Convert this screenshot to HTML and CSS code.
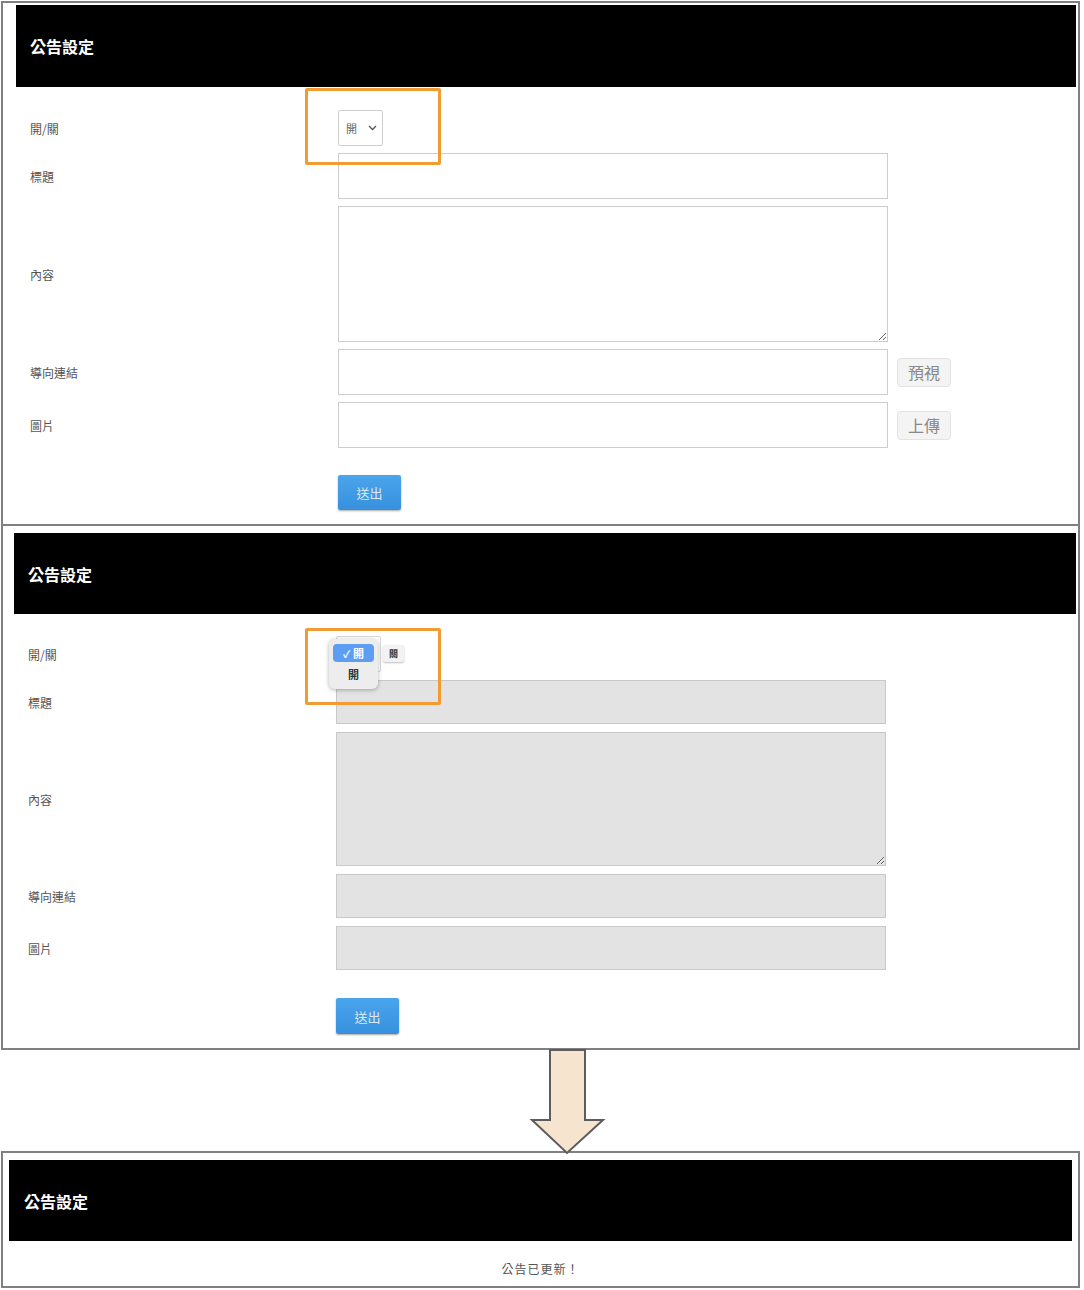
FILE: index.html
```html
<!DOCTYPE html>
<html lang="zh-Hant">
<head>
    <meta charset="UTF-8">
    <meta name="viewport" content="width=device-width, initial-scale=1.0">
    <title>公告設定</title>
    <link rel="stylesheet" href="styles.css">
</head>
<body>
    <div class="page">

        <!-- step 1: form -->
        <div class="panel">
            <div class="panel-head">公告設定</div>
            <div class="form">
                <div class="row">
                    <div class="label">開/關</div>
                    <div class="select-wrap">
                        <select class="select">
                            <option>開</option>
                            <option>關</option>
                        </select>
                        <svg class="chevron" width="9" height="6" viewBox="0 0 9 6"><path d="M1 1l3.5 3.5L8 1" fill="none" stroke="#555" stroke-width="1.3"/></svg>
                    </div>
                </div>
                <div class="row">
                    <div class="label">標題</div>
                    <input class="field" type="text">
                </div>
                <div class="row">
                    <div class="label">內容</div>
                    <textarea class="field area"></textarea>
                </div>
                <div class="row">
                    <div class="label">導向連結</div>
                    <input class="field" type="text">
                    <button class="btn-light">預視</button>
                </div>
                <div class="row">
                    <div class="label">圖片</div>
                    <input class="field" type="text">
                    <button class="btn-light">上傳</button>
                </div>
                <div class="row submit-row">
                    <div class="label"></div>
                    <button class="btn-submit">送出</button>
                </div>
            </div>
            <div class="mark"></div>
        </div>

        <!-- step 2: switched off -->
        <div class="panel panel-two">
            <div class="panel-head">公告設定</div>
            <div class="form">
                <div class="row">
                    <div class="label">開/關</div>
                    <div class="select-wrap">
                        <div class="select ghost"></div>
                        <div class="menu">
                            <div class="menu-item active"><span class="check">✓</span>開</div>
                            <div class="menu-item">開</div>
                        </div>
                        <div class="chip">關</div>
                    </div>
                </div>
                <div class="row">
                    <div class="label">標題</div>
                    <input class="field" type="text" disabled>
                </div>
                <div class="row">
                    <div class="label">內容</div>
                    <textarea class="field area" disabled></textarea>
                </div>
                <div class="row">
                    <div class="label">導向連結</div>
                    <input class="field" type="text" disabled>
                </div>
                <div class="row">
                    <div class="label">圖片</div>
                    <input class="field" type="text" disabled>
                </div>
                <div class="row submit-row">
                    <div class="label"></div>
                    <button class="btn-submit">送出</button>
                </div>
            </div>
            <div class="mark"></div>
        </div>

        <div class="arrow">
            <svg width="76" height="106" viewBox="0 0 76 106">
                <path d="M20 2H55V72H73L37 105L2 72H20Z" fill="#f6e4cf" stroke="#5c5c5c" stroke-width="2" stroke-linejoin="miter"/>
            </svg>
        </div>

        <!-- step 3: done -->
        <div class="panel panel-three">
            <div class="panel-head">公告設定</div>
            <div class="message">公告已更新！</div>
        </div>

    </div>
</body>
</html>
```

FILE: styles.css
```css
body {
    margin: 0;
    background: #fff;
    font-family: "Noto Sans CJK TC", "Noto Sans", sans-serif;
}

.page {
    width: 1080px;
    padding-left: 1px;
    box-sizing: border-box;
}

.panel {
    position: relative;
    border: 2px solid #808080;
    padding: 2px 2px 14px 13px;
    margin-top: 1px;
}

.panel-head {
    height: 82px;
    background: #000;
    color: #fff;
    font-size: 16px;
    font-weight: bold;
    display: flex;
    align-items: center;
    padding-left: 14px;
}

.form {
    display: flex;
    flex-direction: column;
    gap: 7px;
    padding: 23px 0 0 14px;
}

.row {
    display: flex;
    align-items: center;
}

.label {
    width: 308px;
    flex-shrink: 0;
    font-size: 12px;
    color: #555;
}

.select-wrap {
    position: relative;
    width: 45px;
    height: 36px;
}

.select {
    width: 45px;
    height: 36px;
    box-sizing: border-box;
    border: 1px solid #cfcfcf;
    border-radius: 2px;
    background: #fff;
    appearance: none;
    -webkit-appearance: none;
    padding-left: 7px;
    font-family: inherit;
    font-size: 11px;
    color: #666;
}

.chevron {
    position: absolute;
    right: 6px;
    top: 15px;
}

.field {
    width: 550px;
    height: 46px;
    box-sizing: border-box;
    border: 1px solid #cdcdcd;
    background: #fff;
    margin: 0;
    font-family: inherit;
}

.field:disabled {
    background: #e3e3e3;
    border-color: #c8c8c8;
}

.area {
    height: 136px;
    resize: vertical;
}

.btn-light {
    margin-left: 9px;
    width: 54px;
    height: 29px;
    background: #f4f4f4;
    border: 1px solid #e3e3e3;
    border-radius: 4px;
    color: #888;
    font-family: inherit;
    font-size: 16px;
    padding: 0;
}

.submit-row {
    margin-top: 20px;
}

.btn-submit {
    width: 63px;
    height: 35px;
    border: none;
    border-radius: 2px;
    background: linear-gradient(#4ba5ec, #3790dc);
    box-shadow: 0 1px 2px rgba(0, 0, 0, 0.35);
    color: #dbe9f7;
    font-family: inherit;
    font-size: 13px;
    padding: 0;
}

/* orange highlight around the switch */
.mark {
    position: absolute;
    left: 302px;
    top: 85px;
    width: 136px;
    height: 77px;
    box-sizing: border-box;
    border: 3px solid #f39b33;
    border-radius: 2px;
}

.panel-two {
    margin-top: -2px;
    padding: 7px 2px 14px 11px;
}

.panel-two .form {
    padding-top: 22px;
    gap: 8px;
}

.panel-two .panel-head {
    height: 81px;
}

.panel-two .field {
    height: 44px;
}

.panel-two .area {
    height: 134px;
}

.panel-two .btn-submit {
    height: 36px;
}

.panel-two .mark {
    top: 102px;
}

.ghost {
    border-color: #d8d8d8;
}

.menu {
    position: absolute;
    left: -7px;
    top: 3px;
    width: 49px;
    height: 50px;
    box-sizing: border-box;
    padding: 5px 4px;
    background: #ededed;
    border-radius: 6px;
    box-shadow: 0 1px 4px rgba(0, 0, 0, 0.3);
}

.menu-item {
    height: 18px;
    border-radius: 4px;
    font-size: 11px;
    font-weight: bold;
    color: #333;
    display: flex;
    align-items: center;
    justify-content: center;
    margin-top: 3px;
}

.menu-item.active {
    margin-top: 0;
    background: #5d9ef5;
    color: #fff;
}

.check {
    font-size: 10px;
    margin-right: 3px;
}

.chip {
    position: absolute;
    left: 47px;
    top: 9px;
    width: 21px;
    height: 17px;
    background: #f2f2f2;
    border-radius: 2px;
    box-shadow: 0 1px 2px rgba(0, 0, 0, 0.25);
    font-size: 9px;
    font-weight: bold;
    color: #333;
    display: flex;
    align-items: center;
    justify-content: center;
}

.arrow {
    height: 103px;
    padding-left: 529px;
}

.arrow svg {
    display: block;
    margin-top: -2px;
    overflow: visible;
    position: relative;
    z-index: 1;
}

.panel-three {
    margin-top: 0;
    padding: 7px 6px 0 6px;
}

.panel-three .panel-head {
    height: 81px;
    padding-left: 15px;
}

.message {
    height: 45px;
    display: flex;
    align-items: center;
    justify-content: center;
    padding-top: 10px;
    box-sizing: border-box;
    font-size: 12px;
    letter-spacing: 1px;
    color: #555;
}
```
